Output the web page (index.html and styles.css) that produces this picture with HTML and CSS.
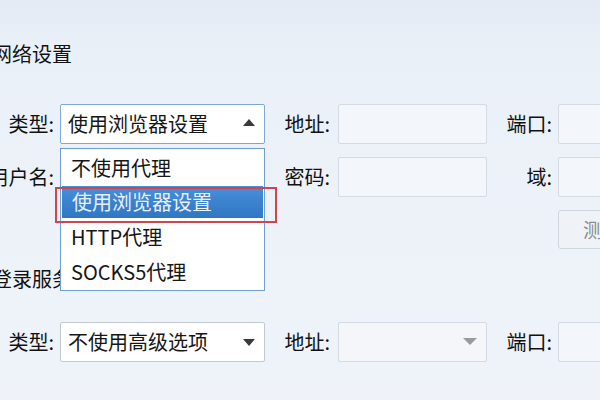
FILE: index.html
```html
<!DOCTYPE html>
<html lang="zh-CN">
<head>
<meta charset="utf-8">
<title>网络设置</title>
<link rel="stylesheet" href="styles.css">
</head>
<body>
<div class="page">
  <h2 class="section-title first">网络设置</h2>
  <div class="form-grid">
    <label class="lbl">类型:</label>
    <div class="select active">
      <span class="select-text">使用浏览器设置</span>
      <span class="tri up"></span>
      <ul class="dropdown">
        <li class="opt">不使用代理</li>
        <li class="opt selected">使用浏览器设置</li>
        <li class="opt">HTTP代理</li>
        <li class="opt">SOCKS5代理</li>
      </ul>
      <div class="mark"></div>
    </div>
    <label class="lbl mid">地址:</label>
    <div class="input"></div>
    <label class="lbl end">端口:</label>
    <div class="input"></div>

    <label class="lbl">用户名:</label>
    <div class="input"></div>
    <label class="lbl mid">密码:</label>
    <div class="input"></div>
    <label class="lbl end">域:</label>
    <div class="input"></div>

    <div class="btn-cell"><button class="btn">测试</button></div>
  </div>

  <h2 class="section-title second">登录服务器</h2>
  <div class="form-grid">
    <label class="lbl">类型:</label>
    <div class="select">
      <span class="select-text">不使用高级选项</span>
      <span class="tri down"></span>
    </div>
    <label class="lbl mid">地址:</label>
    <div class="input combo"><span class="tri down gray"></span></div>
    <label class="lbl end">端口:</label>
    <div class="input"></div>
  </div>
</div>
</body>
</html>
```

FILE: styles.css
```css
html, body {
  margin: 0;
  padding: 0;
}
body {
  width: 600px;
  height: 400px;
  overflow: hidden;
  background: linear-gradient(180deg, #e3eaf4 0%, #eaf0f8 12%, #edf2f9 50%, #eff3f9 100%);
  font-family: "Noto Sans CJK SC", "Microsoft YaHei", sans-serif;
  font-size: 20px;
  color: #111111;
}
.page {
  position: relative;
  width: 600px;
  height: 400px;
}
.section-title {
  margin: 0 0 0 -8px;
  font-size: 20px;
  font-weight: normal;
  line-height: 28px;
  height: 28px;
  white-space: nowrap;
  color: #111111;
}
.section-title.first {
  padding-top: 40px;
  margin-bottom: 36px;
}
.section-title.second {
  margin-top: 16px;
  margin-bottom: 29px;
}
.form-grid {
  display: grid;
  margin-left: -20px;
  grid-template-columns: 80px 205px 73px 149px 71px 160px;
  grid-auto-rows: 40px;
  row-gap: 12.5px;
}
.lbl {
  display: flex;
  align-items: center;
  justify-content: flex-end;
  padding-right: 6px;
  line-height: 28px;
  white-space: nowrap;
}
.lbl.mid { padding-right: 8px; }
.lbl.end { padding-right: 6px; }
.input {
  box-sizing: border-box;
  height: 40px;
  background: #f3f6fb;
  border: 1px solid #d4dbe5;
  border-radius: 2px;
  position: relative;
}
.input.combo { background: #f4f6fa; }
.select {
  position: relative;
  box-sizing: border-box;
  height: 40px;
  background: #ffffff;
  border: 1px solid #c3c9d1;
  border-radius: 2px;
  display: flex;
  align-items: center;
  padding-left: 7px;
}
.select.active {
  border-color: #7ea8da;
}
.select-text {
  line-height: 28px;
  white-space: nowrap;
  color: #161616;
}
.tri {
  position: absolute;
  right: 9px;
  top: 50%;
  width: 0;
  height: 0;
  border-left: 6.5px solid transparent;
  border-right: 6.5px solid transparent;
}
.tri.up {
  border-bottom: 7px solid #3a3a3a;
  margin-top: -5px;
}
.tri.down {
  border-top: 7px solid #3a3a3a;
  margin-top: -3px;
}
.tri.gray {
  border-top-color: #9a9a9a;
  border-left-width: 7px;
  border-right-width: 7px;
  margin-top: -4px;
}
.dropdown {
  position: absolute;
  left: -1px;
  top: 43px;
  width: 205px;
  box-sizing: border-box;
  margin: 0;
  padding: 1px 0 1px;
  list-style: none;
  background: #ffffff;
  border: 1px solid #6f9dd4;
  z-index: 2;
}
.opt {
  height: 35px;
  line-height: 35px;
  padding-left: 10px;
  white-space: nowrap;
  color: #161616;
}
.opt.selected {
  margin: 1px 1px;
  height: 32px;
  line-height: 32px;
  background: linear-gradient(180deg, #4a8fd8 0%, #3b82cf 50%, #2f76c3 100%);
  color: #e8f1fb;
}
.mark {
  position: absolute;
  left: -6px;
  top: 82px;
  width: 222px;
  height: 36px;
  box-sizing: border-box;
  border: 2px solid #cf4651;
  z-index: 3;
}
.btn-cell {
  grid-column: 6;
  display: flex;
}
.btn {
  width: 90px;
  height: 39px;
  margin-top: 1px;
  box-sizing: border-box;
  background: #eff3f8;
  border: 1px solid #cfd6df;
  border-radius: 3px;
  font-family: inherit;
  font-size: 20px;
  color: #8a8c90;
  padding: 0;
}
```
